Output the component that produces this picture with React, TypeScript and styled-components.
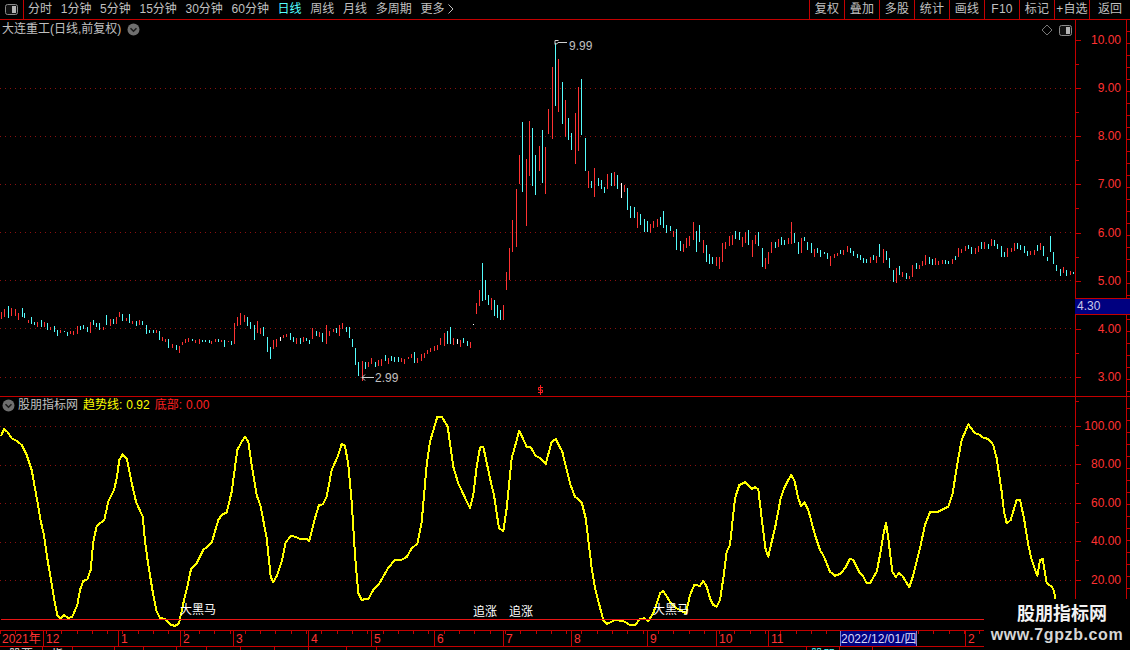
import React from "react";
import styled, { createGlobalStyle } from "styled-components";

const RED_LINE = "#c40000";
const RED_TEXT = "#ff3232";
const GREY = "#c0c0c0";
const GRID = "#8c1010";
const FONT = `"Liberation Sans", "Noto Sans CJK SC", sans-serif`;

const Global = createGlobalStyle`
  html, body { margin: 0; padding: 0; background: #000; }
  body { font-family: ${FONT}; font-size: 12px; }
`;

const Screen = styled.div`
  position: relative;
  width: 1130px;
  height: 650px;
  overflow: hidden;
  background: #000;
  color: ${GREY};
  display: flex;
  flex-direction: column;
`;

/* ---------- toolbar ---------- */
const Toolbar = styled.header`
  height: 19px;
  flex: none;
  display: flex;
  align-items: stretch;
  border-bottom: 1px solid ${RED_LINE};
  line-height: 19px;
  white-space: nowrap;
`;
const ToggleCell = styled.div`
  width: 23px;
  flex: none;
  display: flex;
  align-items: center;
  justify-content: center;
  border-right: 1px solid ${RED_LINE};
`;
const PeriodNav = styled.nav`
  display: flex;
  gap: 8.7px;
  padding-left: 4px;
`;
const Period = styled.span<{ $active?: boolean }>`
  color: ${(p) => (p.$active ? "#54ffff" : GREY)};
`;
const MoreArrow = styled.svg`
  margin-left: 4px;
  vertical-align: -1px;
`;
const ActionBar = styled.div`
  margin-left: auto;
  display: flex;
`;
const Action = styled.span<{ $last?: boolean }>`
  width: ${(p) => (p.$last ? "40px" : "34px")};
  border-left: 1px solid ${RED_LINE};
  text-align: center;
  letter-spacing: ${(p) => (p.$last ? "0" : "0.2px")};
`;

/* ---------- panes ---------- */
const Pane = styled.section<{ $h: number }>`
  position: relative;
  flex: none;
  height: ${(p) => p.$h}px;
  display: flex;
  border-bottom: 1px solid ${RED_LINE};
`;
const Plot = styled.svg`
  display: block;
  flex: none;
  width: 1075px;
  height: 100%;
`;
const Axis = styled.aside`
  flex: 1;
  display: flex;
  border-left: 1px solid ${RED_LINE};
  min-width: 0;
`;
const Scale = styled.div<{ $top: number; $gap: number }>`
  flex: 1;
  display: flex;
  flex-direction: column;
  gap: ${(p) => p.$gap}px;
  padding-top: ${(p) => p.$top}px;
`;
const ScaleRow = styled.div<{ $minor: number }>`
  position: relative;
  flex: none;
  height: 16px;
  line-height: 16px;
  padding-right: 5px;
  text-align: right;
  color: ${RED_TEXT};
  &::before {
    content: "";
    position: absolute;
    left: 0;
    top: 8px;
    width: 5px;
    height: 1px;
    background: ${RED_LINE};
  }
  &::after {
    content: "";
    position: absolute;
    left: 0;
    top: ${(p) => p.$minor}px;
    width: 3px;
    height: 1px;
    background: ${RED_LINE};
  }
`;
const Rail = styled.div`
  position: relative;
  width: 3px;
  flex: none;
  border-left: 1px solid ${RED_LINE};
  background: repeating-linear-gradient(
    to bottom,
    transparent 0,
    transparent 11px,
    ${RED_LINE} 11px,
    ${RED_LINE} 12px
  );
`;

/* overlays in the price pane */
const PaneTitle = styled.div`
  position: absolute;
  left: 2px;
  top: 1px;
  height: 16px;
  display: flex;
  align-items: center;
  gap: 6px;
  line-height: 16px;
  white-space: nowrap;
`;
const CornerTools = styled.div`
  position: absolute;
  left: 1041px;
  top: 4px;
  display: flex;
  align-items: center;
  gap: 6px;
`;
const PriceNote = styled.span<{ $x: number; $y: number }>`
  position: absolute;
  left: ${(p) => p.$x}px;
  top: ${(p) => p.$y}px;
  line-height: 14px;
  color: ${GREY};
`;
const PriceTag = styled.div`
  position: absolute;
  left: 1075px;
  top: 278px;
  width: 55px;
  height: 15px;
  box-sizing: content-box;
  background: #000080;
  border-top: 1px solid ${RED_LINE};
  border-bottom: 1px solid ${RED_LINE};
  line-height: 15px;
  padding-left: 2px;
  color: #c8c8e8;
`;
const SignalMark = styled.svg`
  position: absolute;
  left: 537px;
  top: 364px;
`;

/* overlays in the indicator pane */
const Legend = styled.div`
  position: absolute;
  left: 2px;
  top: 1px;
  height: 15px;
  display: flex;
  align-items: center;
  line-height: 15px;
  white-space: nowrap;
`;
const LegendName = styled.span`
  margin-left: 3px;
  color: ${GREY};
`;
const LegendItem = styled.span<{ $color: string }>`
  margin-left: 5px;
  color: ${(p) => p.$color};
  i {
    font-style: normal;
    margin-left: 4px;
  }
`;
const Signal = styled.span<{ $x: number; $y: number }>`
  position: absolute;
  left: ${(p) => p.$x}px;
  top: ${(p) => p.$y}px;
  line-height: 14px;
  color: #fff;
  white-space: nowrap;
`;

/* ---------- date axis ---------- */
const DateAxis = styled.div`
  position: relative;
  flex: none;
  height: 15px;
  display: flex;
  border-bottom: 1px solid ${RED_LINE};
  line-height: 17px;
  color: ${RED_TEXT};
  background: repeating-linear-gradient(
      to right,
      ${RED_LINE} 0,
      ${RED_LINE} 1px,
      transparent 1px,
      transparent 15.3px
    )
    0 0 / 100% 3px no-repeat;
`;
const DateCell = styled.span<{ $w: number; $first?: boolean }>`
  flex: none;
  width: ${(p) => p.$w}px;
  box-sizing: border-box;
  padding-left: 2px;
  border-left: ${(p) => (p.$first ? "none" : `1px solid ${RED_LINE}`)};
  white-space: nowrap;
`;
const DateCursor = styled.span`
  position: absolute;
  left: 840px;
  top: 0;
  width: 77px;
  height: 15px;
  box-sizing: border-box;
  background: #000080;
  border-left: 1px solid #8080d0;
  border-right: 1px solid #8080d0;
  color: #d8d8f8;
  line-height: 16px;
  text-align: center;
  white-space: nowrap;
`;

/* ---------- tab strip, cut by the window edge ---------- */
const TabStrip = styled.div`
  flex: none;
  height: 16px;
  display: flex;
`;
const Tab = styled.span<{ $w: number; $active?: boolean }>`
  flex: none;
  width: ${(p) => p.$w}px;
  box-sizing: border-box;
  border-right: 1px solid ${RED_LINE};
  text-align: center;
  line-height: 17px;
  white-space: nowrap;
  color: ${(p) => (p.$active ? "#54ffff" : "#e8e8e8")};
`;

/* ---------- watermark ---------- */
const Watermark = styled.div`
  position: absolute;
  left: 984px;
  top: 599px;
  width: 146px;
  height: 51px;
  background: #000;
  display: flex;
  flex-direction: column;
  align-items: center;
  color: #f2f2f2;
`;
const WatermarkName = styled.div`
  margin-top: 3px;
  padding-left: 10px;
  font-size: 18px;
  font-weight: 700;
  line-height: 24px;
`;
const WatermarkUrl = styled.div`
  font-size: 16px;
  font-weight: 700;
  line-height: 18px;
  letter-spacing: 0.6px;
  color: #d6d6d6;
`;

/* ---------- data ---------- */
type Bar = { x: number; y1: number; y2: number; c: string };
const parse = (ox: number, oy: number, s: string, k = 3): Bar[] =>
  s.split(";").map((t) => {
    const [x, a, b] = t.slice(1).split(",").map(Number);
    return { x: ox + x / k, y1: oy + a / k, y2: oy + b / k, c: t[0] };
  });

const bars: Bar[] = [
  ...parse(0, 290, "r3,65,85;r13,58,83;c24,48,84;r34,54,78;r44,56,78;r55,70,92;c65,54,80;c73,70,84;r84,90,100;c94,82,102;c103,97,107;r112,97,112;c122,90,112;r132,96,110;c142,100,122;r151,112,120;c162,108,126;c172,120,138;r181,120,130;c191,124,128;c202,126,137;r211,124,133;r220,122,134;r232,108,132;c241,108,120;c250,106,118;c260,112,128;r271,96,128;c279,90,104;c289,98,110;c298,100,122;r310,112,122;c319,76,106;r329,86,106;c339,88,104;r349,82,102;r358,66,82;c367,72,92;r379,84,92;c388,72,100;r397,94,104;c408,92,106;r418,90,106;c427,94,106;c437,104,130;c447,120,128;c458,120,130;r467,120,130;c476,122,148;r485,142,154;r495,148,156;c505,146,174;r517,162,174;c527,166,182;r536,168,188;r545,156,166;r556,148,160;r565,144,156;c575,148,154;r586,150,160;r596,148,162;c605,150,156;c615,150,156;c626,150,158;r634,152,160;r645,148,156;c654,148,158;r664,150,156;c673,150,170;r683,152,156;c694,154,166;r703,98,160;r712,82,110"),
  ...parse(240, 300, "r1,40,75;r13,46,66;c22,50,78;c31,66,88;c43,75,120;r52,64,100;r61,84,102;c70,82,110;c82,110,156;c91,140,176;r100,120,146;r109,118,142;w121,110,122;r130,106,116;r139,102,112;c151,100,122;c160,110,124;r169,114,132;c179,114,132;r190,110,124;c199,114,122;c208,120,132;r217,84,116;c229,92,108;r238,96,112;c247,98,126;r259,76,134;r268,92,106;r278,86,96;c287,84,100;r298,74,108;r307,70,88;c317,80,96;c328,82,116;c337,116,140;c346,144,194;c355,186,228;r367,182,242;c376,186,208;r385,186,202;r394,174,192;c406,186,200;r415,180,198;r424,178,198;c436,165,184;r445,174,192;c454,168,184;c463,170,184;c475,172,188;r484,174,186;r493,176,192;r505,172,178;r514,162,174;c523,156,190;r532,174,190;r544,162,182;r553,158,172;r562,150,162;r571,144,156;r583,138,154;r592,134,148;r601,114,136;r613,98,136;c622,92,130;c631,82,132;r640,114,134;w652,118,132;r661,120,140;c670,114,128;c682,122,136;r691,126,144;w700,72,75;r709,10,42"),
  ...parse(0, 0, "r479,290,306;c482,263,301;c485,280,300;c488,295,305;r491,298,310;c494,300,316;c497,305,318;c500,310,320;r503,305,320;r506,272,290;r509,248,280", 1),
  ...parse(450, 30, "r187,570,666;r199,477,650;r208,375,462;c217,276,486;r229,387,588;r238,273,438;c247,294,468;c256,375,495;r268,348,423;c277,300,459;r286,351,492;r295,237,312;r307,111,327;c316,40,228;r325,87,246;c337,156,282;r346,210,320;c355,264,330;c364,309,360;r376,249,402;r385,171,363;c394,147,315;c406,324,423;r415,423,474;c424,453,474;r433,414,501;c445,444,468;c454,450,477;c463,471,489;r472,432,477;c484,429,468;r493,426,468;c502,435,477;w514,459,504;r523,465,486;c532,474,540;c541,528,564;c553,531,564;r562,546,594"),
  ...parse(640, 190, "c1,72,105;c13,88,128;c22,93,127;r31,102,129;r40,94,114;r52,87,111;c61,81,105;c70,63,114;c79,105,129;c91,108,123;r100,123,141;c109,117,180;c121,153,183;r130,162,186;r139,144,174;r148,138,168;r160,96,150;c169,123,186;c178,105,156;r190,150,189;c199,165,216;c208,192,222;c217,201,222;r229,201,228;r238,201,237;r247,159,216;r256,156,177;r268,138,168;r277,135,165;c286,123,147;c298,126,150;r307,141,171;r316,126,159;c325,120,165;r337,150,201;r346,135,162;c355,126,168;c367,174,231;r376,204,237;r385,186,222;r394,156,189;c406,156,174;r415,147,171;c424,141,165;c433,150,165;r445,144,162;r454,96,162;c463,129,159;c475,156,192;r484,144,189;c493,141,153;c502,156,180;c514,159,189;r523,177,201;c532,174,189;c541,180,201;c553,186,192;c562,189,207;r571,198,228;r583,192,204;r592,189,198;c601,180,192;r610,180,195;r622,168,186;c631,174,189;c640,183,198;c652,192,204;c661,195,210;c670,204,219;c679,207,219;r691,201,219;c700,195,210;r709,198,219;c718,162,201"),
  ...parse(880, 220, "r10,87,129;c19,93,120;c28,114,144;c40,150,186;r49,144,189;c58,138,165;r67,156,171;c79,159,177;r88,168,177;r97,135,171;c109,129,147;r118,135,147;r127,123,138;r136,105,135;c148,111,132;c157,117,135;r166,114,135;r175,123,135;r187,120,132;c196,120,132;c205,123,132;r217,117,132;c226,108,120;r235,84,111;r244,87,99;r256,78,93;c265,75,87;c274,81,102;r286,84,102;r295,78,96;c304,66,87;r313,66,87;c325,72,87;r334,57,78;c343,60,78;c352,72,87;c364,78,111;c373,96,111;r382,84,111;r394,84,96;r403,69,93;c412,69,87;c421,75,90;c433,78,99;c442,93,108;r451,93,105;r463,90,105;c472,75,93;r481,69,90;c490,78,108;c502,111,123;c511,48,96;c520,96,132;c529,135,153;c541,147,168;r550,141,159;c559,150,168;r571,153,165;c580,156,162"),
];

const BAR_COLOR: Record<string, string> = { r: "#ff3232", c: "#54fcfc", w: "#ffffff" };

const curve = (ox: number, pts: number[]) => {
  const out: string[] = [];
  for (let i = 0; i < pts.length; i += 2) {
    out.push(`${(ox + pts[i] / 3).toFixed(1)},${(395 + pts[i + 1] / 3).toFixed(1)}`);
  }
  return out.join(" ");
};
const trend = [
  curve(0, [3,123,12,103,22,110,35,130,50,137,65,150,80,180,95,225,105,280,115,335,122,378,132,420,142,490,152,550,162,610,172,660,182,670,192,661,205,669,217,665,232,630,240,585,250,558,262,553,272,525,280,440,290,393,300,385,313,375,325,320,342,285,350,250,358,195,368,178,380,190,392,250,400,285,408,320,428,365,435,440,445,510,458,590,470,650,480,668,495,672,510,688,525,693,537,685,550,625,562,575,573,523,588,508,610,465,635,443,655,375,665,360,680,352,695,290,712,165,725,140,735,126,745,140,755,210,770,300,782,335,800,430,812,545,820,562,832,540,845,500,857,442,873,423,885,425,900,432]),
  curve(300, [20,431,28,438,45,370,57,330,68,328,80,305,95,225,115,180,125,147,135,152,145,210,155,320,165,480,175,595,185,614,205,612,220,585,237,567,265,518,285,495,305,494,320,486,335,460,352,446,365,380,380,210,390,140,412,65,425,65,443,95,460,215,475,265,510,340,520,300,530,215,540,158,550,155,570,250,582,300,597,400,610,408,620,340,635,190,658,107,680,155,692,157,707,183,722,190,737,207,755,140,767,132,787,170,810,265,825,305,845,322,857,370,875,520,885,580,910,675,920,687,945,675,970,678,990,690,1005,690,1020,672,1033,670,1045,678,1060,655,1080,595,1090,588,1110,620,1130,640,1158,655,1170,600,1183,570,1200,572]),
  curve(700, [10,558,20,575,30,610,40,630,50,635,60,615,70,550,80,470,90,450,105,310,118,270,135,262,155,282,165,277,175,283,185,370,197,465,205,485,215,440,225,400,242,310,252,280,273,240,283,255,295,310,303,332,313,322,325,345,345,420,360,465,372,485,390,530,405,542,420,537,435,520,450,491,460,495,480,535,490,545,500,565,510,565,530,530,540,480,550,420,558,383,565,430,577,530,587,546,597,535,607,542,628,577,640,540,660,460,675,390,690,352,715,350,745,335,757,300,775,190,785,135,805,88,825,115,835,117,850,128,865,132,880,150,890,190,905,290,912,350,920,385,932,375,950,315,960,315,972,370,985,450,995,495,1012,542,1020,495,1028,492,1040,565,1055,575,1062,587,1066,612]),
].join(" ");

const periods = ["分时", "1分钟", "5分钟", "15分钟", "30分钟", "60分钟", "日线", "周线", "月线", "多周期"];
const actions = ["复权", "叠加", "多股", "统计", "画线", "F10", "标记", "+自选", "返回"];
const priceScale = ["10.00", "9.00", "8.00", "7.00", "6.00", "5.00", "4.00", "3.00"];
const indicatorScale = ["100.00", "80.00", "60.00", "40.00", "20.00"];
const months: [string, number][] = [
  ["2021年", 43], ["12", 75], ["1", 62], ["2", 53], ["3", 75], ["4", 63], ["5", 63],
  ["6", 69], ["7", 68], ["8", 76], ["9", 69], ["10", 52], ["11", 197], ["2", 165],
];
const tabs: [string, number, boolean?][] = [
  ["股票", 43], ["指", 30], ["", 42], ["", 29], ["", 33], ["", 30], ["", 34], ["", 34],
  ["", 34], ["", 38], ["", 30], ["", 430], ["股朋", 33, true], ["", 33],
];

/* ---------- small drawings ---------- */
const PanelToggle = () => (
  <svg width="13" height="11" viewBox="0 0 13 11">
    <rect x="0.5" y="0.5" width="12" height="10" rx="2" fill="#111" stroke="#8a8a8a" />
    <rect x="7" y="2" width="4" height="7" fill="#b4b4b4" />
  </svg>
);
const ChevronDisc = () => (
  <svg width="13" height="13" viewBox="0 0 13 13">
    <circle cx="6.5" cy="6.5" r="6" fill="#6f6f6f" />
    <path d="M3.5 5.2 6.5 8.2 9.5 5.2" fill="none" stroke="#1c1c1c" strokeWidth="1.6" />
  </svg>
);

export default function App() {
  return (
    <Screen>
      <Global />
      <Toolbar>
        <ToggleCell>
          <PanelToggle />
        </ToggleCell>
        <PeriodNav>
          {periods.map((p) => (
            <Period key={p} $active={p === "日线"}>
              {p}
            </Period>
          ))}
          <Period>
            更多
            <MoreArrow width="6" height="10" viewBox="0 0 6 10">
              <path d="M0.5 0.5 5 5 0.5 9.5" fill="none" stroke="#c0c0c0" />
            </MoreArrow>
          </Period>
        </PeriodNav>
        <ActionBar>
          {actions.map((a, i) => (
            <Action key={a} $last={i === actions.length - 1}>
              {a}
            </Action>
          ))}
        </ActionBar>
      </Toolbar>

      <Pane $h={376}>
        <Plot viewBox="0 20 1075 376" shapeRendering="crispEdges">
          {[88, 136, 184, 232, 280, 328, 377].map((y) => (
            <line key={y} x1="0" x2="1075" y1={y + 0.5} y2={y + 0.5} stroke={GRID} strokeDasharray="1 4" />
          ))}
          {bars.map((b, i) => (
            <rect
              key={i}
              x={Math.round(b.x)}
              y={Math.round(b.y1)}
              width="1"
              height={Math.max(1, Math.round(b.y2 - b.y1))}
              fill={BAR_COLOR[b.c]}
            />
          ))}
          <g shapeRendering="auto" fill="none" stroke="#d0d0d0">
            <path d="M556.5 40.5h-1.5v4M555 40.5l3.5 0M555.5 44.5l3 -2M558 42.5h9" />
            <path d="M362 377.5h12M362 377.5l3 -3M362 377.5l3 3" />
          </g>
        </Plot>
        <Axis>
          <Scale $top={12} $gap={32.14}>
            {priceScale.map((v) => (
              <ScaleRow key={v} $minor={32}>
                {v}
              </ScaleRow>
            ))}
          </Scale>
          <Rail />
        </Axis>
        <PaneTitle>
          大连重工(日线,前复权)
          <ChevronDisc />
        </PaneTitle>
        <CornerTools>
          <svg width="12" height="12" viewBox="0 0 12 12">
            <path d="M6 1 11 6 6 11 1 6Z" fill="none" stroke="#777" />
          </svg>
          <PanelToggle />
        </CornerTools>
        <PriceNote $x={569} $y={19}>9.99</PriceNote>
        <PriceNote $x={375} $y={351}>2.99</PriceNote>
        <PriceTag>4.30</PriceTag>
        <SignalMark width="7" height="12" viewBox="0 0 7 12">
          <path d="M6 3.5H1.5V6H5.5V8.5H1M3.5 1V11" fill="none" stroke="#ff2020" />
        </SignalMark>
      </Pane>

      <Pane $h={233}>
        <Plot viewBox="0 397 1075 233">
          <g shapeRendering="crispEdges">
            {[426, 465, 503, 542, 580].map((y) => (
              <line key={y} x1="0" x2="1075" y1={y + 0.5} y2={y + 0.5} stroke={GRID} strokeDasharray="1 4" />
            ))}
          </g>
          <polyline points={trend} fill="none" stroke="#ffff00" strokeWidth="2" strokeLinejoin="round" shapeRendering="crispEdges" />
          <line x1="1" x2="1075" y1="619.5" y2="619.5" stroke="#e81414" strokeWidth="1" shapeRendering="crispEdges" />
        </Plot>
        <Axis>
          <Scale $top={21} $gap={22.4}>
            {indicatorScale.map((v) => (
              <ScaleRow key={v} $minor={27}>
                {v}
              </ScaleRow>
            ))}
          </Scale>
          <Rail />
        </Axis>
        <Legend>
          <ChevronDisc />
          <LegendName>股朋指标网</LegendName>
          <LegendItem $color="#ffff00">趋势线:<i>0.92</i></LegendItem>
          <LegendItem $color="#ff2020">底部:<i>0.00</i></LegendItem>
        </Legend>
        <Signal $x={180} $y={206}>大黑马</Signal>
        <Signal $x={473} $y={208}>追涨</Signal>
        <Signal $x={509} $y={208}>追涨</Signal>
        <Signal $x={653} $y={206}>大黑马</Signal>
      </Pane>

      <DateAxis>
        {months.map(([m, w], i) => (
          <DateCell key={i} $w={w} $first={i === 0}>
            {m}
          </DateCell>
        ))}
        <DateCursor>2022/12/01/四</DateCursor>
      </DateAxis>

      <TabStrip>
        {tabs.map(([t, w, active], i) => (
          <Tab key={i} $w={w} $active={active}>
            {t}
          </Tab>
        ))}
      </TabStrip>

      <Watermark>
        <WatermarkName>股朋指标网</WatermarkName>
        <WatermarkUrl>www.7gpzb.com</WatermarkUrl>
      </Watermark>
    </Screen>
  );
}
